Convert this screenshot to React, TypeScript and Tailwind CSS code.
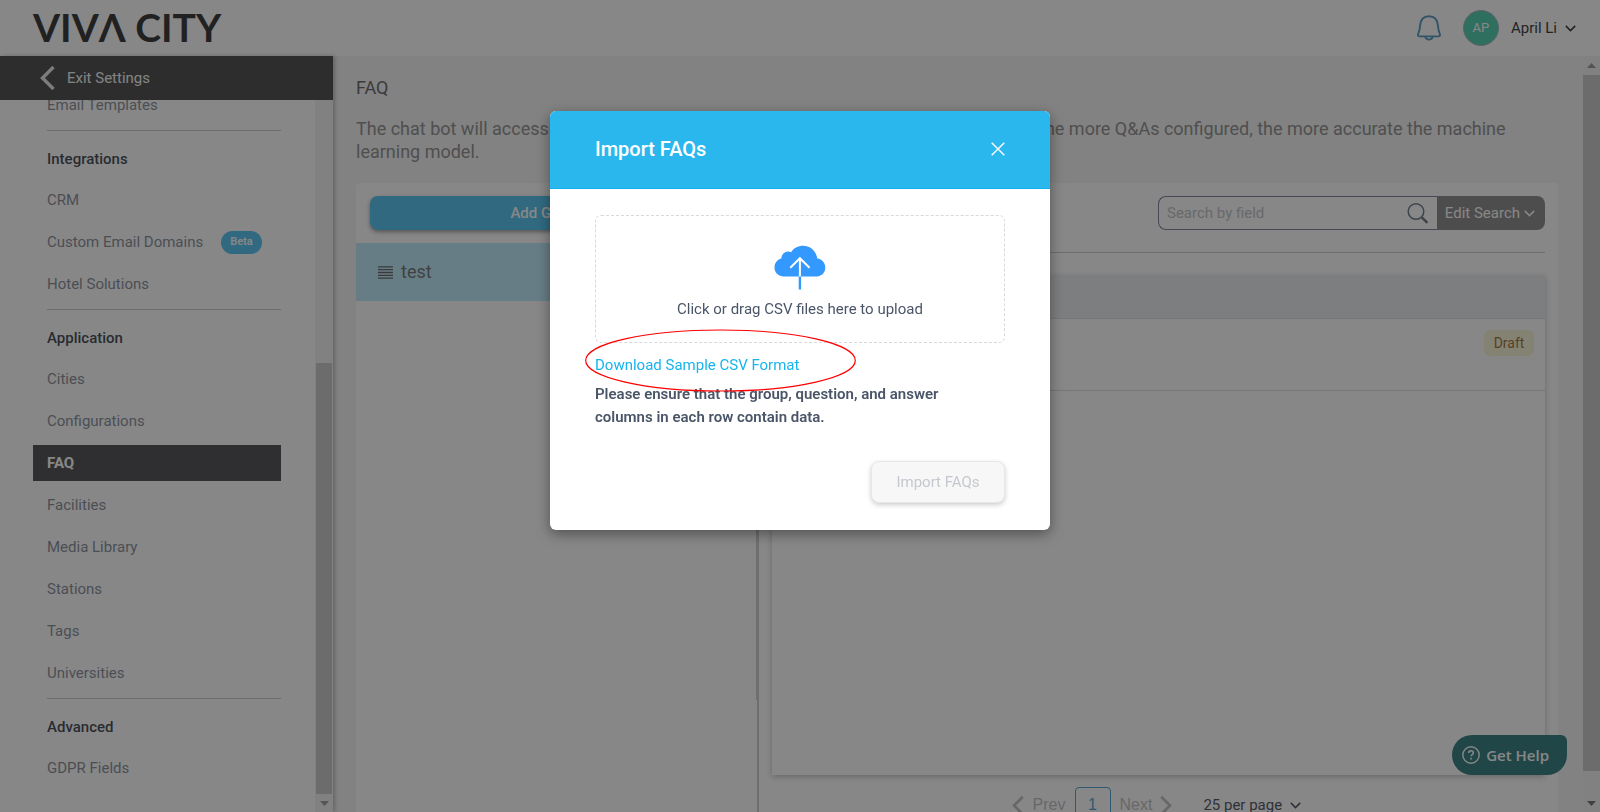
import React, { useState } from "react";

const sections = [
    { title: "", items: [{ label: "Email Templates" }] },
    {
        title: "Integrations",
        items: [{ label: "CRM" }, { label: "Custom Email Domains", badge: "Beta" }, { label: "Hotel Solutions" }],
    },
    {
        title: "Application",
        items: [
            { label: "Cities" },
            { label: "Configurations" },
            { label: "FAQ", active: true },
            { label: "Facilities" },
            { label: "Media Library" },
            { label: "Stations" },
            { label: "Tags" },
            { label: "Universities" },
        ],
    },
    { title: "Advanced", items: [{ label: "GDPR Fields" }] },
] as { title: string; items: { label: string; badge?: string; active?: boolean }[] }[];

const ChevronDown = ({ className = "" }: { className?: string }) => (
    <svg className={`h-[7px] w-[11px] ${className}`} viewBox="0 0 11 7" fill="none" stroke="currentColor" strokeWidth="1.5" aria-hidden="true">
        <path d="M0.8 0.9 5.5 5.6 10.2 0.9" />
    </svg>
);

const ThickChevron = ({ className = "", right = false }: { className?: string; right?: boolean }) => (
    <svg className={className} viewBox="0 0 15 24" fill="none" stroke="currentColor" strokeWidth="3.4" aria-hidden="true">
        <path d={right ? "M1.5 1 12.5 12 1.5 23" : "M13.5 1 2.5 12 13.5 23"} />
    </svg>
);

const ArrowUp = ({ className = "" }: { className?: string }) => (
    <svg className={`h-[5px] w-[9px] fill-current ${className}`} viewBox="0 0 9 5" aria-hidden="true">
        <path d="M0 5 4.5 0 9 5Z" />
    </svg>
);

const Header = () => (
    <header className="flex h-14 shrink-0 items-center justify-between bg-white pr-6 pl-[33px]">
        <a href="#" aria-label="Viva City" className="pb-[2px] font-['Lato',sans-serif] text-[39px] leading-none font-bold text-black">
            VIVΛ CITY
        </a>
        <div className="flex items-center">
            <button type="button" aria-label="Notifications" className="text-[#2b80b5]">
                <svg className="h-[26px] w-6" viewBox="0 0 24 26" fill="none" stroke="currentColor" strokeWidth="1.9" aria-hidden="true">
                    <path d="M2.6 21.4C1.2 21.4.6 20.2 1.2 18.9 2.6 16.2 2.8 13.6 3.1 10.4 3.6 4.6 7 1.2 12 1.2s8.4 3.4 8.9 9.2c.3 3.2.5 5.8 1.9 8.5.6 1.3 0 2.5-1.4 2.5Z" />
                    <path d="M8.2 21.6c.5 2 1.9 3 3.8 3s3.3-1 3.8-3" />
                </svg>
            </button>
            <span className="ml-[22px] flex size-9 items-center justify-center rounded-full border border-gray-400 bg-[#23c39e] text-[13px] text-white">
                AP
            </span>
            <button type="button" className="ml-3 flex items-center gap-2 text-[15px] text-black">
                April Li
                <ChevronDown />
            </button>
        </div>
    </header>
);

const Sidebar = () => (
    <aside className="z-10 flex w-[333px] shrink-0 flex-col bg-white shadow-[2px_0_4px_rgba(0,0,0,0.3)]">
        <a href="#" className="flex h-11 shrink-0 items-center gap-3 bg-[#202020] pl-10 text-[15px] text-gray-100">
            <ThickChevron className="h-6 w-[15px] text-gray-200" />
            Exit Settings
        </a>
        <div className="flex min-h-0 flex-1">
            <nav className="min-w-0 flex-1 overflow-hidden pr-[34px] pl-[33px]">
                <div className="-mt-4">
                    {sections.map((s, i) => (
                        <section key={i} className="mb-1">
                            {s.title && (
                                <h2 className="ml-[14px] border-t border-[#bebebe] pt-4 pb-2 text-[15px] leading-6 font-medium text-gray-900">
                                    {s.title}
                                </h2>
                            )}
                            <ul>
                                {s.items.map((item) => (
                                    <li key={item.label} className="py-[3px]">
                                        <a
                                            href="#"
                                            className={`flex h-9 items-center pl-[14px] text-[15px] ${
                                                item.active ? "bg-[#252528] font-bold text-white" : "text-gray-500"
                                            }`}
                                        >
                                            {item.label}
                                            {item.badge && (
                                                <span className="ml-[18px] flex h-[23px] items-center rounded-full bg-[#29b6ee] px-[9px] text-[11px] font-semibold text-white">
                                                    {item.badge}
                                                </span>
                                            )}
                                        </a>
                                    </li>
                                ))}
                            </ul>
                        </section>
                    ))}
                </div>
            </nav>
            {/* scrollbar */}
            <div className="flex w-[18px] flex-col bg-[#f1f1f1] px-px pt-[263px] pb-[6px]">
                <div className="flex-1 bg-[#bcbcbc]" />
                <ArrowUp className="mx-auto mt-[7px] rotate-180 text-[#808080]" />
            </div>
        </div>
    </aside>
);

const Groups = () => (
    <div className="w-[403px] shrink-0 border-r-2 border-[#c4c4c4]">
        <div className="flex h-[517px] flex-col border-r border-[#c4c4c4]">
            <div className="px-[14px] pt-[13px] pb-[13px]">
                <button
                    type="button"
                    className="flex h-[34px] w-full items-center justify-center gap-2 rounded-lg bg-[#29b6ee] text-[15px] font-medium text-white shadow-[0_2px_4px_rgba(0,0,0,0.5)]"
                >
                    Add Group
                    <svg className="size-3" viewBox="0 0 12 12" stroke="currentColor" strokeWidth="2" aria-hidden="true">
                        <path d="M6 0v12M0 6h12" />
                    </svg>
                </button>
            </div>
            <div className="flex h-[58px] items-center gap-2 bg-[#afe6fa] pl-[22px] text-lg text-neutral-600">
                <svg className="h-[13px] w-[15px] text-neutral-700" viewBox="0 0 15 13" stroke="currentColor" strokeWidth="1.3" aria-hidden="true">
                    <path d="M0 .8h15M0 3.65h15M0 6.5h15M0 9.35h15M0 12.2h15" />
                </svg>
                test
            </div>
        </div>
    </div>
);

const Questions = () => {
    const [search, setSearch] = useState("");
    return (
        <div className="flex min-w-0 flex-1 flex-col pt-[13px] pr-[13px] pl-[13px]">
            <form className="flex h-[34px] w-[387px] self-end" onSubmit={(e) => e.preventDefault()}>
                <div className="flex min-w-0 flex-1 items-center rounded-l-lg border border-r-0 border-[#5c647c] pr-2 pl-2">
                    <input
                        type="text"
                        aria-label="Search by field"
                        placeholder="Search by field"
                        value={search}
                        onChange={(e) => setSearch(e.target.value)}
                        className="min-w-0 flex-1 bg-transparent text-[15px] outline-none placeholder:text-[#b0b3b8]"
                    />
                    <svg className="size-[22px] text-gray-600" viewBox="0 0 22 22" fill="none" stroke="currentColor" aria-hidden="true">
                        <circle cx="9" cy="9.5" r="7.8" strokeWidth="1.5" />
                        <path d="m14.8 15.3 5.6 5.6" strokeWidth="2.5" />
                    </svg>
                </div>
                <button type="button" className="flex items-center gap-1 rounded-r-lg bg-[#6e6e6e] pr-[10px] pl-2 text-[15px] text-white">
                    Edit Search
                    <ChevronDown />
                </button>
            </form>
            <hr className="mt-[22px] border-[#bebebe]" />
            <div className="mt-[22px] h-[500px] shadow-[0_2px_6px_rgba(0,0,0,0.3)]">
                <table className="w-full text-left">
                    <thead>
                        <tr className="h-[43px] border-b border-gray-300 bg-[#e5e9ee]">
                            <th scope="col" aria-label="Question" />
                            <th scope="col" aria-label="Status" />
                        </tr>
                    </thead>
                    <tbody>
                        <tr className="h-[72px] border-b border-gray-300 align-top text-[15px] text-gray-700">
                            <td />
                            <td className="pt-[11px] pr-[11px]">
                                <span className="ml-auto flex h-[26px] w-[50px] items-center justify-center rounded-md bg-[#f7f5cd] text-sm text-yellow-800">
                                    Draft
                                </span>
                            </td>
                        </tr>
                    </tbody>
                </table>
            </div>
            <div className="mt-3 flex h-9 shrink-0 items-center justify-center gap-[9px] pr-1">
                <button type="button" className="flex items-center gap-[9px] font-['Liberation_Sans',sans-serif] text-base text-[#b0b0b0]">
                    <ThickChevron className="h-[19px] w-3" />
                    Prev
                </button>
                <button
                    type="button"
                    className="h-9 w-9 rounded-sm border border-[#2090c0] font-['Liberation_Sans',sans-serif] text-base text-[#2090c0]"
                >
                    1
                </button>
                <button type="button" className="flex items-center gap-2 font-['Liberation_Sans',sans-serif] text-base text-[#b0b0b0]">
                    Next
                    <ThickChevron right className="h-[19px] w-3" />
                </button>
                <label className="ml-[22px] flex items-center gap-2 text-[15px] text-gray-800">
                    <select aria-label="Rows per page" className="appearance-none bg-transparent outline-none">
                        <option>25 per page</option>
                        <option>50 per page</option>
                    </select>
                    <ChevronDown />
                </label>
            </div>
        </div>
    );
};

const ImportModal = () => (
    <div className="fixed inset-0 z-40 flex items-start justify-center bg-[#373737]/60 pt-[111px]">
        <div
            role="dialog"
            aria-labelledby="import-title"
            className="w-[500px] rounded-md bg-white shadow-[0_4px_14px_rgba(0,0,0,0.4)]"
        >
            <div className="flex h-[78px] items-center justify-between rounded-t-md border-b border-[#12b0ee] bg-[#29b7ee] px-[45px] pb-[2px] text-white">
                <h2 id="import-title" className="text-xl font-medium">
                    Import FAQs
                </h2>
                <button type="button" aria-label="Close">
                    <svg className="size-[14px]" viewBox="0 0 14 14" stroke="currentColor" strokeWidth="1.4" aria-hidden="true">
                        <path d="m.7.7 12.6 12.6M13.3.7.7 13.3" />
                    </svg>
                </button>
            </div>
            <div className="relative px-[45px] pt-[26px] pb-[27px] text-[15px] leading-[23px] text-[#4a5568]">
                <label className="flex h-32 cursor-pointer flex-col items-center rounded-md border border-dashed border-[#d9d9d9] pt-[29px]">
                    <svg className="h-[45px] w-[52px]" viewBox="0 0 52 45" fill="none" aria-hidden="true">
                        <path
                            fill="#3399ff"
                            d="M9 31.5C3.6 30.8.5 27.3.5 22.5c0-4.6 2.7-7.8 6.8-9C7.6 9.3 10.5 6.6 14.3 6.6c1 0 1.9.2 2.8.6C19.6 3.2 24 .8 29 .8c7.3 0 13.2 5.3 14.3 12.8 4.7.6 8 4.3 8 8.9 0 4.9-3.3 8.5-8.3 9Z"
                        />
                        <path stroke="#fff" strokeWidth="2" d="M25.9 32V13.5M16.3 22.8 25.9 13.2l9.6 9.6" />
                        <path stroke="#3399ff" strokeWidth="2.4" d="M25.9 31.5v13" />
                    </svg>
                    <span className="mt-2">Click or drag CSV files here to upload</span>
                    <input type="file" accept=".csv" className="sr-only" />
                </label>
                <a href="#" className="mt-[11px] block w-fit text-[#17b4ee]">
                    Download Sample CSV Format
                </a>
                <p className="mt-[6px] pr-10 font-semibold">Please ensure that the group, question, and answer columns in each row contain data.</p>
                <button
                    type="button"
                    disabled
                    className="mt-8 ml-auto block h-[42px] w-[134px] rounded-lg border border-gray-200 bg-[#f7f7f7] text-[15px] text-[#c5c8ce] shadow-[0_2px_5px_rgba(0,0,0,0.2)]"
                >
                    Import FAQs
                </button>
                {/* red marker round the download link */}
                <svg className="pointer-events-none absolute top-[140px] left-[35px] h-[63px] w-[272px]" viewBox="0 0 272 63" fill="none" aria-hidden="true">
                    <ellipse cx="135.5" cy="31.5" rx="134.8" ry="30.5" stroke="#ff0000" strokeWidth="1.2" />
                </svg>
            </div>
        </div>
    </div>
);

const App = () => {
    return (
        <div className="flex h-screen flex-col overflow-hidden bg-[#f2f2f2] font-['Roboto',sans-serif]">
            <Header />
            <div className="flex min-h-0 flex-1">
                <Sidebar />
                <main className="flex min-w-0 flex-1 flex-col overflow-hidden pt-5 pr-[25px] pl-[23px]">
                    <h1 className="text-lg leading-6 text-neutral-700">FAQ</h1>
                    <p className="mt-[17px] text-lg leading-[23px] text-neutral-500">
                        The chat bot will access your Q&As in order to answer the questions from prospects. The more Q&As configured, the more accurate the machine
                        learning model.
                    </p>
                    <div className="mt-5 flex shrink-0 rounded-t bg-white pb-6">
                        <Groups />
                        <Questions />
                    </div>
                </main>
                {/* scrollbar */}
                <div className="flex w-[17px] shrink-0 flex-col items-center bg-[#f1f1f1] pb-[6px]">
                    <ArrowUp className="mt-[7px] text-[#808080]" />
                    <div className="mt-[7px] w-full flex-1 bg-[#bcbcbc]" />
                    <ArrowUp className="mt-[30px] rotate-180 text-[#505050]" />
                </div>
            </div>
            <button
                type="button"
                className="fixed right-[33px] bottom-[37px] z-30 flex h-10 items-center gap-[6px] rounded-[20px] rounded-tr-md bg-[#005c5f] pr-[18px] pl-[10px] font-['Open_Sans',sans-serif] text-[15px] font-semibold text-white"
            >
                <svg className="size-[18px]" viewBox="0 0 18 18" fill="none" stroke="currentColor" strokeWidth="1.4" aria-hidden="true">
                    <circle cx="9" cy="9" r="8.2" />
                    <path strokeWidth="1.6" d="M6.7 7.1c0-1.4 1-2.3 2.3-2.3s2.3.9 2.3 2.1c0 1.7-2.2 1.7-2.2 3.4M9.1 11.7v1.7" />
                </svg>
                Get Help
            </button>
            <ImportModal />
        </div>
    );
};

export default App;
